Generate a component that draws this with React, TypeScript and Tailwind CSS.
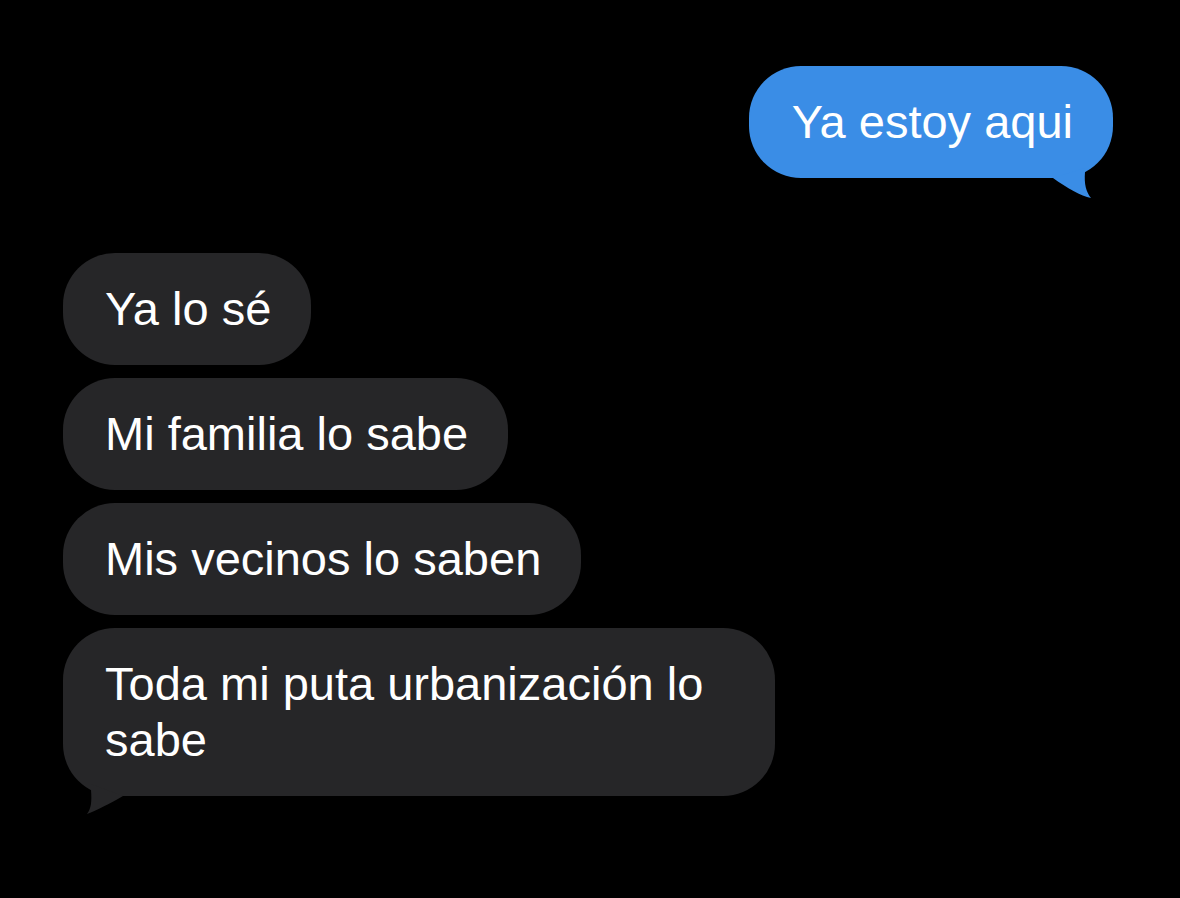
const font = { fontFamily: '"Liberation Sans", Arial, sans-serif' }

function Sent({ text }: { text: string }) {
  return (
    <div className="relative w-fit rounded-[52px] bg-[#3a8de6] py-[28px] pl-[43px] pr-[40px] text-[47px] leading-[56px] text-white">
      {text}
      <svg className="absolute -bottom-[20px] right-0 h-[50px] w-[60px]" viewBox="0 0 60 50">
        <path d="M32 20 L32 24 C31 36 33 44 38 50 C28 48 14 40 0 30 Z" fill="#3a8de6" />
      </svg>
    </div>
  )
}

function Received({ text, tail }: { text: string; tail?: boolean }) {
  return (
    <div className="relative w-fit max-w-[712px] rounded-[52px] bg-[#262628] py-[28px] pl-[42px] pr-[40px] text-[47px] leading-[56px] text-white">
      {text}
      {tail && (
        <svg className="absolute -bottom-[18px] left-0 h-[50px] w-[60px]" viewBox="0 0 60 50">
          <path d="M28 20 L28 26 C29 38 28 45 24 50 C34 46 46 40 60 32 Z" fill="#262628" />
        </svg>
      )}
    </div>
  )
}

export default function App() {
  return (
    <div className="h-[898px] w-[1180px] bg-black pt-[66px]" style={font}>
      <div className="flex justify-end pr-[67px]">
        <Sent text="Ya estoy aqui" />
      </div>
      <div className="mt-[75px] flex flex-col gap-[13px] pl-[63px]">
        <Received text="Ya lo sé" />
        <Received text="Mi familia lo sabe" />
        <Received text="Mis vecinos lo saben" />
        <Received text="Toda mi puta urbanización lo sabe" tail />
      </div>
    </div>
  )
}
